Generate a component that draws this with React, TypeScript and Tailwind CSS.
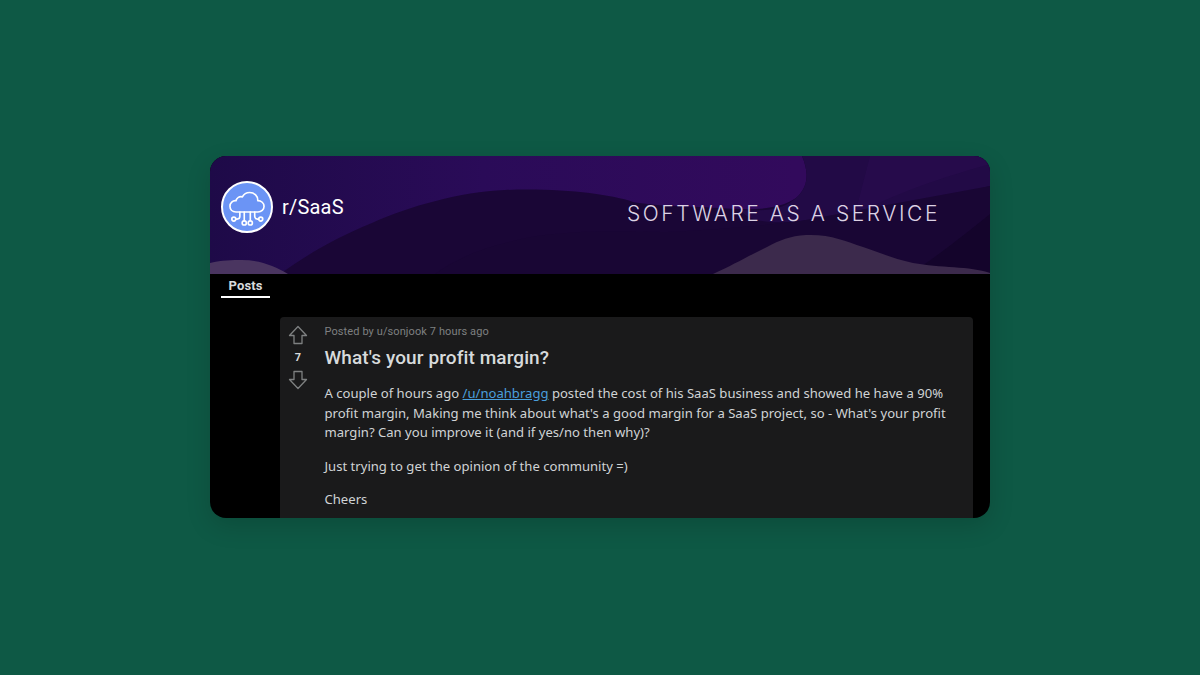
import React from "react";

function Banner() {
  return (
    <svg className="absolute inset-0 w-full h-full" viewBox="0 0 780 118" preserveAspectRatio="none">
      <defs>
        <linearGradient id="bg" x1="0" y1="0" x2="1" y2="0">
          <stop offset="0" stopColor="#1e0a48" />
          <stop offset="0.35" stopColor="#2a0b58" />
          <stop offset="0.75" stopColor="#320a5c" />
          <stop offset="1" stopColor="#320a5c" />
        </linearGradient>
      </defs>
      <rect width="780" height="118" fill="url(#bg)" />
      <path d="M592 0C598 14 600 30 586 42C566 55 540 54 510 52C470 50 445 50 423 46C400 38 350 32 295 34C250 36 200 50 162 67C125 82 95 100 70 118L780 118L780 0Z" fill="#1a0636" />
      <path d="M592 0L780 0L780 30C700 50 640 60 590 65C560 68 540 66 530 54C560 56 575 52 586 42C600 30 598 14 592 0Z" fill="#220a46" />
      <path d="M660 0L780 0L780 8C730 22 690 36 645 58Z" fill="#2a0b50" opacity="0.5" />
      <path d="M225 118C250 100 275 92 295 87C320 80 340 78 357 77C400 74 430 76 457 76C500 74 550 70 590 65L780 30L780 118Z" fill="#190634" />
      <path d="M700 118C735 95 765 70 780 58L780 118Z" fill="#14042b" />
      <path d="M503 118C525 108 540 99 557 91C570 84 580 80 596 79C620 78 635 85 653 91C670 97 685 103 703 107C730 112 760 110 780 117L780 118Z" fill="#3c2a4c" />
      <path d="M0 107C12 104 22 104 32 104C50 104 65 110 78 118L0 118Z" fill="#4a3560" />
    </svg>
  );
}

function CloudLogo() {
  return (
    <div className="w-[52px] h-[52px] rounded-full bg-[#6b94f5] border-2 border-white flex items-center justify-center shrink-0">
      <svg width="44" height="44" viewBox="0 0 40 40" fill="none" stroke="#ffffff" strokeWidth="1.5" strokeLinecap="round" strokeLinejoin="round">
        <path d="M10 24.5C6.5 24.5 4.5 22 4.5 19.3C4.5 16.2 7 14 10 14.3C10.5 11.6 13.2 10 15.8 10.8C17.2 8 19.8 6.8 22.4 6.8C26.8 6.8 30 10.2 29.8 14.2C33 14.2 35.5 16.4 35.5 19.4C35.5 22.4 33 24.5 30 24.5Z" />
        <path d="M13.5 24.5V28.5C13.5 30 12.5 31 11 31H10" />
        <circle cx="8" cy="31" r="1.8" />
        <path d="M27 24.5V28.5C27 30 28 31 29.5 31H30.5" />
        <circle cx="32.5" cy="31" r="1.8" />
        <path d="M17.5 24.5V32.5" />
        <circle cx="17.5" cy="34.5" r="1.9" />
        <path d="M23 24.5V32.5" />
        <circle cx="23" cy="34.5" r="1.9" />
      </svg>
    </div>
  );
}

function Arrow({ down }: { down?: boolean }) {
  return (
    <svg width="20" height="20" viewBox="0 0 20 20" fill="none" stroke="#7e8081" strokeWidth="1.3" strokeLinejoin="round" className={down ? "rotate-180" : ""}>
      <path d="M10 1.5L18.5 10.5H14V18.5H6V10.5H1.5Z" />
    </svg>
  );
}

export default function App() {
  return (
    <div className="w-[1200px] h-[675px] bg-[#0e5945] flex items-start justify-center pt-[156px] overflow-hidden font-['Noto_Sans',sans-serif]">
      <div className="w-[780px] h-[362px] rounded-2xl overflow-hidden bg-black flex flex-col shadow-[0_8px_24px_rgba(0,0,0,0.15)]">
        <div className="relative h-[118px] shrink-0 flex items-center justify-between pl-[11px] pr-[50px]">
          <Banner />
          <div className="relative flex items-center gap-[9px] mt-[-17px]">
            <CloudLogo />
            <span className="text-[20px] leading-6 text-white font-['Roboto',sans-serif] tracking-[0.2px]">r/SaaS</span>
          </div>
          <span className="relative mt-[-3px] text-[21px] leading-7 text-[#dcd2e4] font-['Inter',sans-serif] font-light tracking-[2.55px]">SOFTWARE AS A SERVICE</span>
        </div>
        <div className="h-[43px] shrink-0 pl-[11px]">
          <div className="w-[49px] h-[24px] border-b-2 border-white flex items-center justify-center pt-px">
            <span className="text-[13px] leading-6 font-bold text-[#d7dadc] font-['Roboto',sans-serif] tracking-[0.1px]">Posts</span>
          </div>
        </div>
        <div className="ml-[70px] mr-[17px] flex-1 min-h-0 rounded-t bg-[#1a1a1b] flex">
          <div className="w-[36px] shrink-0 flex flex-col items-center pt-[8px]">
            <Arrow />
            <span className="text-[11px] leading-4 font-bold text-[#d7dadc] mt-[5px] mb-[4px] font-['Roboto',sans-serif]">7</span>
            <Arrow down />
          </div>
          <div className="flex-1 pl-[8.5px] pr-[20px] pt-[7px] min-w-0">
            <div className="text-[11px] leading-4 text-[#7e8081] font-['Roboto',sans-serif] tracking-[0.1px]">Posted by u/sonjook 7 hours ago</div>
            <h1 className="mt-[6px] text-[19px] leading-[24px] font-medium text-[#d7dadc] font-['Roboto',sans-serif] tracking-[0.1px]">What's your profit margin?</h1>
            <p className="mt-[14px] text-[13.1px] leading-[19.5px] text-[#d0d3d5]">
              A couple of hours ago <span className="text-[#4a9fdc] underline">/u/noahbragg</span> posted the cost of his SaaS business and showed he have a 90% profit margin, Making me think about what's a good margin for a SaaS project, so - What's your profit margin? Can you improve it (and if yes/no then why)?
            </p>
            <p className="mt-[14px] text-[13.1px] leading-[19.5px] text-[#d0d3d5]">Just trying to get the opinion of the community =)</p>
            <p className="mt-[14px] text-[13.1px] leading-[19.5px] text-[#d0d3d5]">Cheers</p>
          </div>
        </div>
      </div>
    </div>
  );
}
